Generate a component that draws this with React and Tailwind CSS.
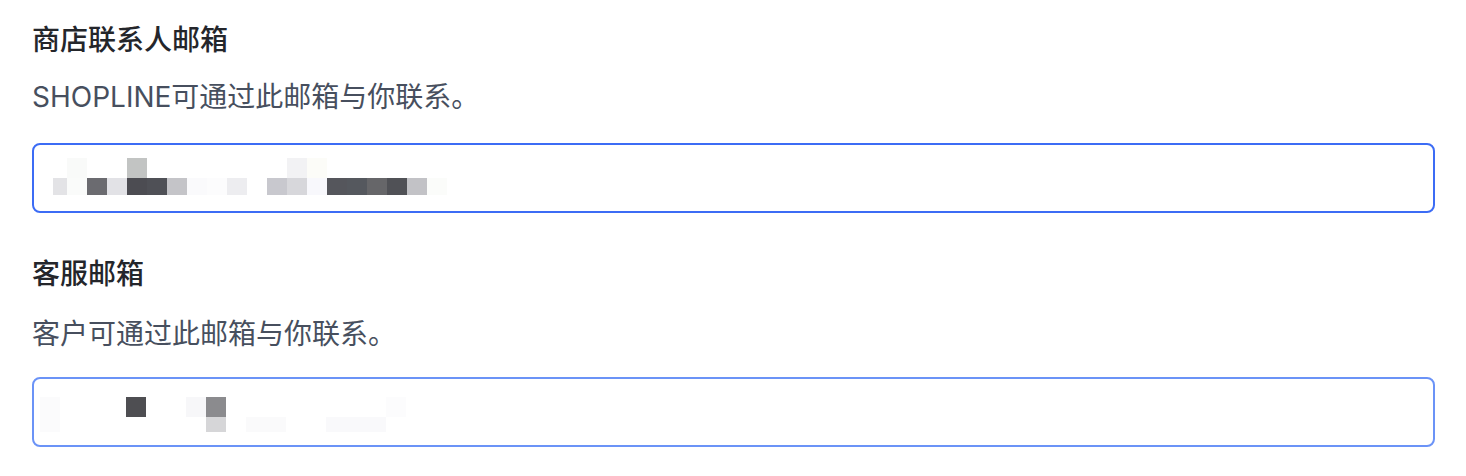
import React from "react";

const FONT = { fontFamily: 'Inter, "Noto Sans CJK SC", sans-serif' };

const mosaic1 = [
  [19, 33, 14, 17, "#e3e3e6"],
  [33, 33, 20, 17, "#fafbfa"],
  [53, 33, 20, 17, "#6b6b70"],
  [73, 33, 20, 17, "#e2e2e6"],
  [93, 33, 20, 17, "#4c4c52"],
  [113, 33, 20, 17, "#4f5056"],
  [133, 33, 20, 17, "#c4c4c8"],
  [153, 33, 20, 17, "#fafafc"],
  [173, 33, 20, 17, "#fcfcfd"],
  [193, 33, 20, 17, "#ededf0"],
  [233, 33, 20, 17, "#c8c8ce"],
  [253, 33, 20, 17, "#d7d7db"],
  [273, 33, 20, 17, "#f8f8fc"],
  [293, 33, 20, 17, "#55565c"],
  [313, 33, 20, 17, "#55585e"],
  [333, 33, 20, 17, "#666669"],
  [353, 33, 20, 17, "#505156"],
  [373, 33, 20, 17, "#c2c2c6"],
  [393, 33, 20, 17, "#fbfcfa"],
  [33, 13, 20, 20, "#f9faf9"],
  [93, 13, 20, 20, "#c2c4c3"],
  [253, 13, 20, 20, "#f2f2f4"],
  [273, 13, 20, 20, "#fcfcf8"],
];

const mosaic2 = [
  [92, 18, 20, 20, "#4e4e52"],
  [152, 18, 20, 20, "#f7f7f9"],
  [172, 18, 20, 20, "#8b8b8e"],
  [172, 38, 20, 15, "#d6d6d8"],
  [212, 38, 40, 15, "#fafafb"],
  [292, 38, 60, 15, "#f9f9fb"],
  [352, 18, 20, 20, "#fcfcfd"],
  [6, 18, 20, 35, "#fbfbfc"],
];

function Mosaic({ rects }) {
  return (
    <svg width="440" height="66" viewBox="0 0 440 66" className="block">
      {rects.map(([x, y, w, h, c], i) => (
        <rect key={i} x={x} y={y} width={w} height={h} fill={c} />
      ))}
    </svg>
  );
}

export default function App() {
  return (
    <div className="w-[1466px] h-[476px] bg-white pl-[32px] pr-[31px] pt-[20px]" style={FONT}>
      <div className="text-[28px] leading-[40px] font-medium text-[#24262b]">商店联系人邮箱</div>
      <div className="mt-[17px] text-[28px] leading-[40px] text-[#474f5e]">SHOPLINE可通过此邮箱与你联系。</div>
      <div className="mt-[26px] h-[70px] rounded-[8px] border-2 border-[#3c6cf5] bg-white overflow-hidden">
        <Mosaic rects={mosaic1} />
      </div>

      <div className="mt-[41px] text-[28px] leading-[40px] font-medium text-[#24262b]">客服邮箱</div>
      <div className="mt-[20px] text-[28px] leading-[40px] text-[#474f5e]">客户可通过此邮箱与你联系。</div>
      <div className="mt-[23px] h-[70px] rounded-[8px] border-2 border-[#6b93f7] bg-white overflow-hidden">
        <Mosaic rects={mosaic2} />
      </div>
    </div>
  );
}
